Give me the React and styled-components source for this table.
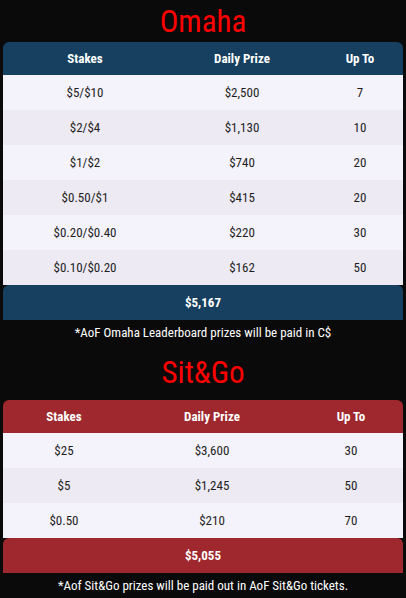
import React from "react";
import styled, { createGlobalStyle } from "styled-components";

const Global = createGlobalStyle`
  html, body { margin: 0; padding: 0; background: #0a0a0a; }
  body { font-family: "Roboto Condensed", "Roboto", "Liberation Sans", sans-serif; font-stretch: condensed; }
`;

const Page = styled.div`
  width: 406px;
  padding: 0 3px;
  box-sizing: border-box;
  display: flex;
  flex-direction: column;
`;

const Title = styled.h2`
  margin: 0;
  height: ${(p) => p.$h}px;
  display: flex;
  align-items: center;
  justify-content: center;
  color: #ff0000;
  font-size: 31px;
  font-weight: 400;
  line-height: 1;
`;

const Table = styled.div`
  width: 400px;
`;

const Row = styled.div`
  display: grid;
  grid-template-columns: ${(p) => p.$cols};
  height: ${(p) => p.$h || 35}px;
  align-items: center;
  background: ${(p) => p.$bg};
  border-radius: ${(p) => (p.$round ? "6px 6px 0 0" : "0")};
`;

const Cell = styled.div`
  text-align: center;
  font-size: 13px;
  color: ${(p) => (p.$head ? "#ffffff" : "#1e1e1e")};
  font-weight: ${(p) => (p.$head ? 700 : 400)};
`;

const Footer = styled.div`
  height: ${(p) => p.$h}px;
  background: ${(p) => p.$bg};
  border-radius: 6px 6px 0 0;
  display: flex;
  align-items: center;
  justify-content: center;
  color: #fff;
  font-weight: 700;
  font-size: 13px;
`;

const Note = styled.div`
  height: ${(p) => p.$h}px;
  display: flex;
  align-items: center;
  justify-content: center;
  color: #ffffff;
  font-size: 13px;
  white-space: nowrap;
`;

const Section = ({ title, titleH, color, cols, rows, total, note, noteH }) => (
  <>
    <Title $h={titleH}>{title}</Title>
    <Table>
      <Row $cols={cols} $h={33} $bg={color} $round>
        <Cell $head>Stakes</Cell>
        <Cell $head>Daily Prize</Cell>
        <Cell $head>Up To</Cell>
      </Row>
      {rows.map((r, i) => (
        <Row key={i} $cols={cols} $bg={i % 2 ? "#edeaf4" : "#f4f2fb"}>
          <Cell>{r[0]}</Cell>
          <Cell>{r[1]}</Cell>
          <Cell>{r[2]}</Cell>
        </Row>
      ))}
      <Footer $h={35} $bg={color}>{total}</Footer>
    </Table>
    <Note $h={noteH}>{note}</Note>
  </>
);

export default function App() {
  return (
    <Page>
      <Global />
      <Section
        title="Omaha"
        titleH={42}
        color="#163f60"
        cols="164px 150px 86px"
        rows={[
          ["$5/$10", "$2,500", "7"],
          ["$2/$4", "$1,130", "10"],
          ["$1/$2", "$740", "20"],
          ["$0.50/$1", "$415", "20"],
          ["$0.20/$0.40", "$220", "30"],
          ["$0.10/$0.20", "$162", "50"],
        ]}
        total="$5,167"
        note="*AoF Omaha Leaderboard prizes will be paid in C$"
        noteH={24}
      />
      <Section
        title="Sit&Go"
        titleH={56}
        color="#9e282d"
        cols="122px 174px 104px"
        rows={[
          ["$25", "$3,600", "30"],
          ["$5", "$1,245", "50"],
          ["$0.50", "$210", "70"],
        ]}
        total="$5,055"
        note="*Aof Sit&Go prizes will be paid out in AoF Sit&Go tickets."
        noteH={25}
      />
    </Page>
  );
}
